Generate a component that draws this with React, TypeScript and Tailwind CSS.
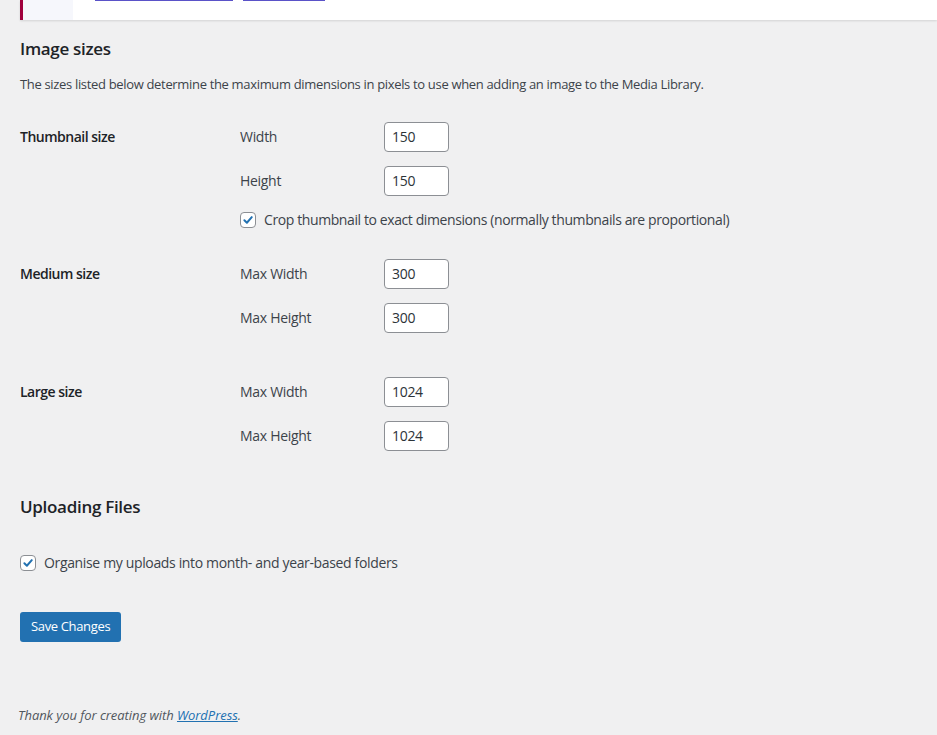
import React from "react";

const font = { fontFamily: '"Open Sans", "Noto Sans", sans-serif' };

function Check() {
  return (
    <span className="inline-flex h-[16px] w-[16px] shrink-0 items-center justify-center rounded-[4px] border border-[#8c8f94] bg-white">
      <svg width="16" height="16" viewBox="0 0 20 20">
        <path d="M4.8 10.4 L8.4 13.9 L15.4 5.9" fill="none" stroke="#2271b1" strokeWidth="2.8" strokeLinecap="round" strokeLinejoin="round" />
      </svg>
    </span>
  );
}

function Field({ label, value }: { label: string; value: string }) {
  return (
    <div className="flex h-[30px] items-center">
      <span className="w-[144px] pb-[1px] text-[14px] tracking-[-0.3px] text-[#3c434a]">{label}</span>
      <div className="flex h-[30px] w-[65px] items-center rounded-[4px] border border-[#8c8f94] bg-white px-[7px] pb-[1px] text-[14px] tracking-[-0.3px] text-[#2c3338]">
        {value}
      </div>
    </div>
  );
}

function RowLabel({ children }: { children: React.ReactNode }) {
  return (
    <div className="flex h-[30px] w-[220px] shrink-0 items-center pb-[2px] text-[14px] font-semibold tracking-[-0.5px] text-[#1d2327]">
      {children}
    </div>
  );
}

export default function App() {
  return (
    <div className="min-h-[735px] w-full bg-[#f0f0f1]" style={font}>
      <div className="ml-[20px] flex h-[20px] bg-white shadow-[0_1px_2px_rgba(0,0,0,0.12)]">
        <div className="w-[3px] bg-[#a0003e]" />
        <div className="w-[50px] bg-[#f6f7fc]" />
        <div className="relative flex-1">
          <div className="absolute left-[22px] top-0 h-[1px] w-[138px] bg-[#5a52c8]" />
          <div className="absolute left-[170px] top-0 h-[1px] w-[82px] bg-[#5a52c8]" />
        </div>
      </div>
      <div className="px-[20px]">
        <h2 className="mt-[17px] text-[17px] font-semibold leading-[24px] tracking-[-0.3px] text-[#1d2327]">Image sizes</h2>
        <p className="mt-[14px] text-[13px] leading-[19px] tracking-[-0.33px] text-[#3c434a]">
          The sizes listed below determine the maximum dimensions in pixels to use when adding an image to the Media Library.
        </p>

        <div className="mt-[28px] flex">
          <RowLabel>Thumbnail size</RowLabel>
          <div className="flex flex-col gap-[14px]">
            <Field label="Width" value="150" />
            <Field label="Height" value="150" />
            <label className="mt-[2px] flex h-[16px] items-center gap-[8px] text-[14px] leading-[16px] tracking-[-0.4px] text-[#3c434a]">
              <Check />
              Crop thumbnail to exact dimensions (normally thumbnails are proportional)
            </label>
          </div>
        </div>

        <div className="mt-[31px] flex">
          <RowLabel>Medium size</RowLabel>
          <div className="flex flex-col gap-[14px]">
            <Field label="Max Width" value="300" />
            <Field label="Max Height" value="300" />
          </div>
        </div>

        <div className="mt-[44px] flex">
          <RowLabel>Large size</RowLabel>
          <div className="flex flex-col gap-[14px]">
            <Field label="Max Width" value="1024" />
            <Field label="Max Height" value="1024" />
          </div>
        </div>

        <h2 className="mt-[44px] text-[17px] font-semibold leading-[24px] tracking-[-0.3px] text-[#1d2327]">Uploading Files</h2>

        <label className="mt-[36px] flex h-[16px] items-center gap-[8px] text-[14px] leading-[16px] tracking-[-0.35px] text-[#3c434a]">
          <Check />
          Organise my uploads into month- and year-based folders
        </label>

        <button className="mt-[41px] flex h-[30px] items-center rounded-[3px] bg-[#2271b1] px-[11px] pb-[1px] text-[13px] tracking-[-0.35px] text-white">
          Save Changes
        </button>
      </div>
      <p className="ml-[18px] mt-[64px] text-[13px] italic leading-[19px] tracking-[-0.05px] text-[#50575e]">
        Thank you for creating with{" "}
        <span className="text-[#2271b1] underline">WordPress</span>.
      </p>
    </div>
  );
}
